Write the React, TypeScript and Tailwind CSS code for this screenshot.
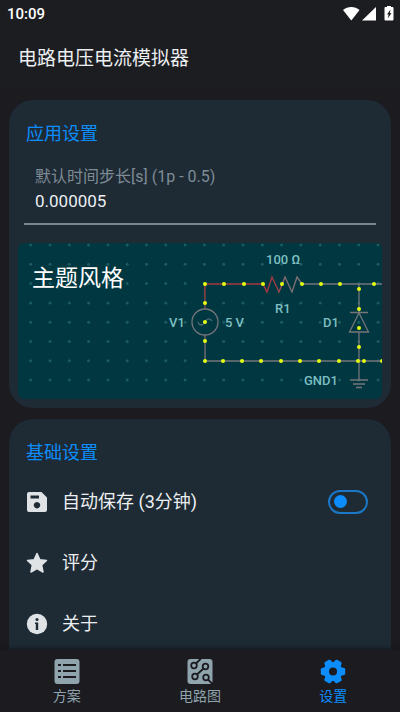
import { useState } from "react";
import type { ReactNode } from "react";

type Point = [number, number];

const CURRENT_DOTS: Point[] = [
  [187, 41], [206, 41], [226, 41], [245, 41], [264, 41], [284, 41], [303, 41], [322, 41], [356, 41],
  [187, 60], [187, 79], [187, 98], [187, 118],
  [205, 118], [224, 118], [243, 118], [263, 118], [282, 118], [301, 118], [321, 118], [340, 118],
  [346, 118], [364, 118],
  [341, 46], [341, 66], [341, 85], [341, 104],
];

const PART_LABELS = [
  { text: "100 Ω", x: 248, y: 21 },
  { text: "R1", x: 257, y: 70 },
  { text: "V1", x: 151, y: 84 },
  { text: "5 V", x: 207, y: 84 },
  { text: "D1", x: 305, y: 84 },
  { text: "GND1", x: 286, y: 142 },
];

function CircuitPreview() {
  const grid: Point[] = [];
  for (let row = 0; row < 8; row++) {
    for (let col = 0; col < 19; col++) grid.push([12.7 + col * 19.3, 2 + row * 19.3]);
  }

  return (
    <svg viewBox="0 0 364 156" className="block w-full" aria-hidden="true">
      <defs>
        <linearGradient id="resistor" gradientUnits="userSpaceOnUse" x1="245" y1="0" x2="284" y2="0">
          <stop offset="0" stopColor="#b5323a" />
          <stop offset="0.35" stopColor="#a23c44" />
          <stop offset="0.6" stopColor="#806f76" />
          <stop offset="1" stopColor="#806f76" />
        </linearGradient>
        <linearGradient id="source" gradientUnits="userSpaceOnUse" x1="0" y1="41" x2="0" y2="118">
          <stop offset="0" stopColor="#b23a40" />
          <stop offset="0.3" stopColor="#94484d" />
          <stop offset="0.7" stopColor="#80686c" />
          <stop offset="1" stopColor="#75757a" />
        </linearGradient>
      </defs>
      <rect width="364" height="156" fill="#003740" />
      {grid.map(([x, y]) => (
        <circle key={`${x}-${y}`} cx={x} cy={y} r="1.5" fill="#1a5c62" />
      ))}
      <g fill="none" stroke="#75757a" strokeWidth="1.3">
        <path d="M187 41H245" stroke="#a63a42" />
        <path d="M245 41l4 8 5-15 7 15 6-15 7 15 5-15 5 7" stroke="url(#resistor)" />
        <path d="M284 41H364M187 118H364" />
        <path d="M186.9 41L187 66M187 92L187.1 118" stroke="url(#source)" />
        <circle cx="187" cy="79" r="13" />
        <path d="M180 79c1 4 5 4 7 0s5-4 7-1" stroke="#4b676f" />
        <path d="M341 41V69M332 69.500H350M341 70L331.500 89H350.500ZM341 89V137" />
        <path d="M332 137H350M335 141H347M338 144.500H344" />
      </g>
      <g fill="#e3fb10">
        {CURRENT_DOTS.map(([x, y]) => (
          <circle key={`${x}-${y}`} cx={x} cy={y} r="2" />
        ))}
      </g>
      <g fill="#7cbfc2" className="text-[13px] font-medium">
        {PART_LABELS.map((label) => (
          <text key={label.text} x={label.x} y={label.y}>
            {label.text}
          </text>
        ))}
      </g>
    </svg>
  );
}

function StatusBar() {
  return (
    <div className="flex h-7 items-center justify-between pr-1 pl-[7px] text-white">
      <span className="text-[15px] font-medium">10:09</span>
      <svg width="54" height="20" viewBox="0 0 54 20" fill="#fff" aria-label="Wi-Fi, 信号, 充电中">
        <path d="M1 6C5.500 2 13 2 17.500 6L9.300 16.500Z" />
        <path d="M34 3V16.500H20Z" />
        <path d="M45 2h4v1h1.500q1 0 1 1V15.500q0 1-1 1h-7q-1 0-1-1V4q0-1 1-1H45Z" />
        <path d="M48.500 5.500L45 10.500h1.700L45.700 14.500 49.500 9.300h-1.700Z" fill="#1c1c20" />
      </svg>
    </div>
  );
}

function SaveIcon() {
  return (
    <svg width="22" height="22" viewBox="0 0 22 22" fill="#dfe3e6" aria-hidden="true">
      <path
        fillRule="evenodd"
        d="M3 1H15.500L21 6.500V19Q21 21 19 21H3Q1 21 1 19V3Q1 1 3 1ZM4.500 4.500V7.500H13V4.500ZM11 11a3.200 3.200 0 1 0 .01 0Z"
      />
    </svg>
  );
}

function StarIcon() {
  return (
    <svg width="22" height="22" viewBox="0 0 22 22" fill="#dfe3e6" aria-hidden="true">
      <path
        stroke="#dfe3e6"
        strokeWidth="1.500"
        strokeLinejoin="round"
        d="M11 1.500L13.900 7.800 20.500 8.500 15.600 13 17 20 11 16.600 5 20 6.400 13 1.500 8.500 8.100 7.800Z"
      />
    </svg>
  );
}

function InfoIcon() {
  return (
    <svg width="22" height="22" viewBox="0 0 22 22" aria-hidden="true">
      <circle cx="11" cy="11" r="10.200" fill="#dfe3e6" />
      <circle cx="11" cy="6.500" r="1.500" fill="#1e2a34" />
      <path d="M9 9.500h3.200V17H9.800v-6H9Z" fill="#1e2a34" />
    </svg>
  );
}

function PlanIcon() {
  return (
    <svg width="26" height="26" viewBox="0 0 26 26" aria-hidden="true">
      <rect x=".5" y="1" width="25" height="25" rx="3" fill="currentColor" />
      <path
        d="M4 7h3M4 13h3M4 19h3M9 7h13M9 13h13M9 19h13"
        stroke="#1c1c20"
        strokeWidth="2"
      />
    </svg>
  );
}

function CircuitIcon() {
  return (
    <svg width="26" height="26" viewBox="0 0 26 26" aria-hidden="true">
      <rect x=".5" y="1" width="25" height="25" rx="3" fill="currentColor" />
      <g fill="none" stroke="#1c1c20" strokeWidth="1.800">
        <circle cx="7" cy="7.500" r="2.800" />
        <circle cx="18.500" cy="8.500" r="2.800" />
        <circle cx="8" cy="18.500" r="2.800" />
        <circle cx="19" cy="19.500" r="2.800" />
        <path d="M9 5.500L14 .5M16.500 10.500L10 16.500M21 21.500L26 26.500" />
      </g>
    </svg>
  );
}

function GearIcon() {
  return (
    <svg width="26" height="26" viewBox="0 0 26 26" aria-hidden="true">
      <g fill="currentColor">
        <circle cx="13" cy="13.500" r="9.500" />
        {[30, 90, 150, 210, 270, 330].map((angle) => (
          <path
            key={angle}
            d="M8.500 6.500L9.500 2.300Q9.800 1.300 10.800 1.300H15.200Q16.200 1.300 16.500 2.300L17.500 6.500Z"
            transform={`rotate(${angle} 13 13.5)`}
          />
        ))}
      </g>
      <circle cx="13" cy="13.500" r="4" fill="#1c1c20" />
    </svg>
  );
}

function NavButton({
  icon,
  label,
  active = false,
  onClick,
}: {
  icon: ReactNode;
  label: string;
  active?: boolean;
  onClick: () => void;
}) {
  return (
    <button
      onClick={onClick}
      aria-current={active ? "page" : undefined}
      className={`flex flex-1 flex-col items-center gap-0.5 pt-2 pb-1.5 text-sm ${
        active ? "text-[#0c8dfb]" : "text-[#90a4ae]"
      }`}
    >
      {icon}
      {label}
    </button>
  );
}

export default function App() {
  const [timeStep, setTimeStep] = useState("0.000005");
  const [autoSave, setAutoSave] = useState(false);
  const [tab, setTab] = useState("settings");

  return (
    <div className="flex h-screen flex-col overflow-hidden bg-[#1b1b20] font-[Roboto,'Noto_Sans_CJK_SC',sans-serif] text-[#eceff1]">
      <header className="h-[90px] shrink-0 border-b border-[#19191d] bg-[#1c1d21]">
        <StatusBar />
        <h1 className="px-[18px] pt-[17px] text-[19px] leading-7">电路电压电流模拟器</h1>
      </header>

      <main className="flex min-h-0 flex-1 flex-col gap-[11px] overflow-y-auto px-[9px] pt-2.5 [scrollbar-width:none]">
        <section className="shrink-0 rounded-3xl bg-[#1e2a34] px-[9px] pt-[22px] pb-[9px]">
          <h2 className="px-2 text-lg leading-6 text-[#0c8dfb]">应用设置</h2>
          <div className="mx-1.5 mt-[19px] border-b-2 border-[#77848e] px-[11px] pb-2.5">
            <label htmlFor="time-step" className="block text-base leading-6 text-[#7f8c96]">
              默认时间步长[s] (1p - 0.5)
            </label>
            <input
              id="time-step"
              value={timeStep}
              onChange={(e) => setTimeStep(e.target.value)}
              inputMode="decimal"
              className="block h-6 w-full bg-transparent text-[17px] leading-6 outline-none"
            />
          </div>
          <button className="relative mt-[18px] block w-full overflow-hidden rounded-md text-left">
            <CircuitPreview />
            <span className="absolute top-5 left-3.5 text-[23px] leading-8 text-white">主题风格</span>
          </button>
        </section>

        <section className="shrink-0 rounded-3xl bg-[#1e2a34] px-[17px] pt-[22px] pb-6">
          <h2 className="text-lg leading-6 text-[#0c8dfb]">基础设置</h2>
          <div className="mt-1.5 flex h-[61px] items-center gap-3.5">
            <SaveIcon />
            <label htmlFor="auto-save" className="flex-1 text-lg">
              自动保存 (3分钟)
            </label>
            <input
              id="auto-save"
              type="checkbox"
              role="switch"
              checked={autoSave}
              onChange={(e) => setAutoSave(e.target.checked)}
              className="mr-1.5 flex h-6 w-10 appearance-none items-center rounded-full border-2 border-[#1c78c6] px-1 before:size-[13px] before:rounded-full before:bg-[#0c8dfb] checked:justify-end"
            />
          </div>
          <button className="flex h-[61px] w-full items-center gap-3.5 text-lg">
            <StarIcon />
            评分
          </button>
          <button className="flex h-[61px] w-full items-center gap-3.5 text-lg">
            <InfoIcon />
            关于
          </button>
        </section>
      </main>

      <nav className="relative flex shrink-0 bg-[#1b1b20] shadow-[0_-1px_6px_#141418]">
        <NavButton
          icon={<PlanIcon />}
          label="方案"
          active={tab === "plans"}
          onClick={() => setTab("plans")}
        />
        <NavButton
          icon={<CircuitIcon />}
          label="电路图"
          active={tab === "circuit"}
          onClick={() => setTab("circuit")}
        />
        <NavButton
          icon={<GearIcon />}
          label="设置"
          active={tab === "settings"}
          onClick={() => setTab("settings")}
        />
      </nav>
    </div>
  );
}
